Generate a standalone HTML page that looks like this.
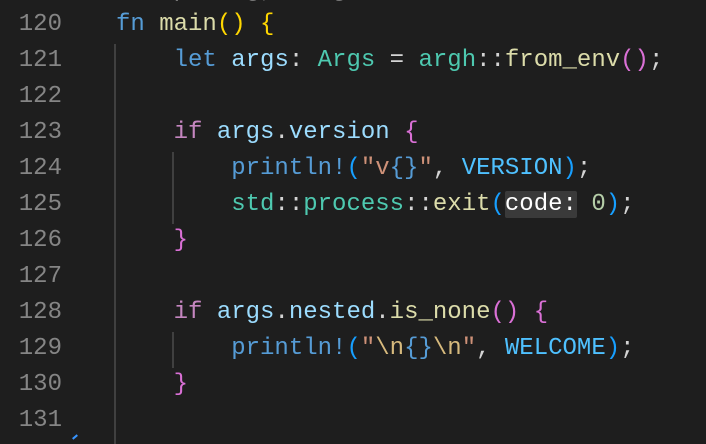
<!DOCTYPE html>
<html><head><style>
body{margin:0;background:#1e1e1e;width:706px;height:444px;overflow:hidden;position:relative;font-family:"Liberation Mono",monospace;font-size:24px}
.l{position:absolute;left:0;height:36px;line-height:36px;white-space:pre;width:706px}
.n{position:absolute;left:0;width:62px;text-align:right;color:#858585}
.c{position:absolute;left:116px;color:#d4d4d4}
.k{color:#569cd6}.f{color:#dcdcaa}.y{color:#ffd700}.v{color:#9cdcfe}.t{color:#4ec9b0}.p{color:#c586c0}.m{color:#da70d6}.b{color:#179fff}.s{color:#ce9178}.C{color:#4fc1ff}.num{color:#b5cea8}
.h{background:#3a3a3a;color:#fff;border-radius:2px}
.g{position:absolute;width:2px;background:#404040}
</style></head><body>
<div class="g" style="left:114px;top:44px;height:400px"></div>
<div class="g" style="left:172px;top:152px;height:72px"></div>
<div class="g" style="left:172px;top:332px;height:36px"></div>
<div class="l" style="top:-27px"><span class="c" style="color:#777">    p    g,    g</span></div>
<div class="l" style="top:7px"><span class="n">120</span><span class="c"><span class="k">fn</span> <span class="f">main</span><span class="y">()</span> <span class="y">{</span></span></div>
<div class="l" style="top:43px"><span class="n">121</span><span class="c">    <span class="k">let</span> <span class="v">args</span>: <span class="t">Args</span> = <span class="t">argh</span>::<span class="f">from_env</span><span class="m">()</span>;</span></div>
<div class="l" style="top:79px"><span class="n">122</span></div>
<div class="l" style="top:115px"><span class="n">123</span><span class="c">    <span class="p">if</span> <span class="v">args</span>.<span class="v">version</span> <span class="m">{</span></span></div>
<div class="l" style="top:151px"><span class="n">124</span><span class="c">        <span class="k">println!</span><span class="b">(</span><span class="s">"v<span class="k">{}</span>"</span>, <span class="C">VERSION</span><span class="b">)</span>;</span></div>
<div class="l" style="top:187px"><span class="n">125</span><span class="c">        <span class="t">std</span>::<span class="t">process</span>::<span class="f">exit</span><span class="b">(</span><span class="h">code:</span> <span class="num">0</span><span class="b">)</span>;</span></div>
<div class="l" style="top:223px"><span class="n">126</span><span class="c">    <span class="m">}</span></span></div>
<div class="l" style="top:259px"><span class="n">127</span></div>
<div class="l" style="top:295px"><span class="n">128</span><span class="c">    <span class="p">if</span> <span class="v">args</span>.<span class="v">nested</span>.<span class="f">is_none</span><span class="m">()</span> <span class="m">{</span></span></div>
<div class="l" style="top:331px"><span class="n">129</span><span class="c">        <span class="k">println!</span><span class="b">(</span><span class="s">"<span style="color:#d7ba7d">\n</span><span class="k">{}</span><span style="color:#d7ba7d">\n</span>"</span>, <span class="C">WELCOME</span><span class="b">)</span>;</span></div>
<div class="l" style="top:367px"><span class="n">130</span><span class="c">    <span class="m">}</span></span></div>
<div class="l" style="top:403px"><span class="n">131</span></div>
<div style="position:absolute;left:72px;top:436px;width:6px;height:2px;background:#3794ff;transform:rotate(-40deg)"></div>
</body></html>
